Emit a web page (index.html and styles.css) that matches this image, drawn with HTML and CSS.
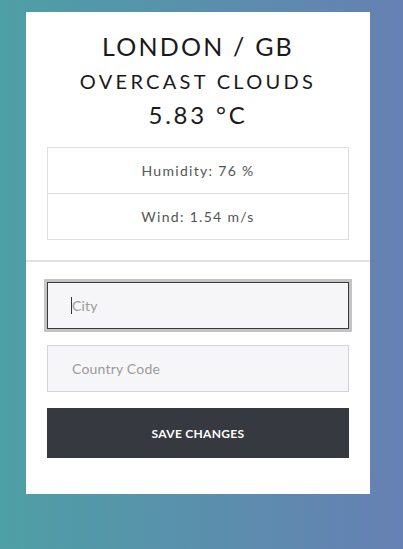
FILE: index.html
```
<!DOCTYPE html>
<html lang="en">
<head>
<meta charset="utf-8">
<title>Weather</title>
<link rel="stylesheet" href="styles.css">
</head>
<body>
<div class="page">
  <div class="card">
    <div class="summary">
      <h1 class="city">LONDON / GB</h1>
      <h2 class="desc">OVERCAST CLOUDS</h2>
      <div class="temp">5.83 °C</div>
      <ul class="stats">
        <li>Humidity: 76 %</li>
        <li>Wind: 1.54 m/s</li>
      </ul>
    </div>
    <hr class="divider">
    <form class="form">
      <div class="field">
        <input type="text" class="input input-focus" placeholder="City">
        <span class="caret"></span>
      </div>
      <div class="field">
        <input type="text" class="input" placeholder="Country Code">
      </div>
      <button type="button" class="btn">SAVE CHANGES</button>
    </form>
  </div>
</div>
</body>
</html>
```
FILE: styles.css
```
* { box-sizing: border-box; }
html, body { margin: 0; padding: 0; height: 100%; }
body {
  font-family: "Lato", "Open Sans", sans-serif;
  background: linear-gradient(to right, #4e9fa5, #6680b3);
  color: #1a1a1a;
}
.page {
  padding: 12px 0 0 26px;
}
.card {
  width: 344px;
  background: #fff;
  padding: 17px 0 36px;
}
.summary {
  padding: 0 21px;
  text-align: center;
}
.city {
  margin: 0;
  font-size: 25px;
  line-height: 34px;
  font-weight: 400;
  letter-spacing: 2.2px;
}
.desc {
  margin: 4px 0 0;
  font-size: 20px;
  line-height: 28px;
  font-weight: 400;
  letter-spacing: 3.3px;
}
.temp {
  margin-top: 4px;
  font-size: 24px;
  line-height: 32px;
  letter-spacing: 2.8px;
}
.stats {
  list-style: none;
  margin: 16px 0 0;
  padding: 0;
}
.stats li {
  border: 1px solid #dedede;
  border-bottom: none;
  height: 46px;
  line-height: 45px;
  font-size: 14px;
  color: #555;
  letter-spacing: 1.3px;
}
.stats li:last-child { border-bottom: 1px solid #dedede; height: 47px; }
.divider {
  margin: 20px 0 0;
  border: none;
  height: 2px;
  background: #e2e2e2;
}
.form {
  padding: 20px 21px 0;
  display: flex;
  flex-direction: column;
  gap: 16px;
}
.field { position: relative; }
.input {
  display: block;
  width: 302px;
  height: 47px;
  border: 1px solid #d4d4d8;
  background: #f6f6f8;
  padding: 0 24px;
  font-family: inherit;
  font-size: 14px;
  color: #333;
  outline: none;
}
.input::placeholder { color: #9a9a9a; letter-spacing: 0.2px; }
.input-focus {
  border: 1px solid #3a3a3a;
  box-shadow: 0 0 0 3px #c4c4c4;
}
.caret {
  position: absolute;
  left: 24px;
  top: 15px;
  width: 1px;
  height: 17px;
  background: #333;
}
.btn {
  width: 302px;
  height: 50px;
  border: none;
  background: #363a40;
  color: #fff;
  font-family: inherit;
  font-size: 12px;
  font-weight: 700;
  letter-spacing: 0.3px;
}
```
